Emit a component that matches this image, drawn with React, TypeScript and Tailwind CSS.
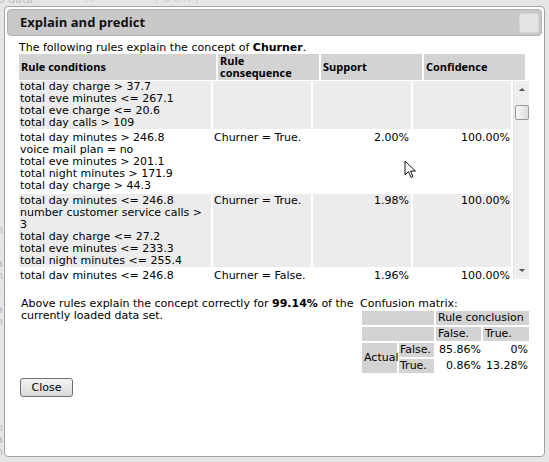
import React from 'react'

type Rule = {
  conditions: string[]
  consequence: string
  support: string
  confidence: string
}

const rules: Rule[] = [
  {
    conditions: [
      'total day charge > 37.7',
      'total eve minutes <= 267.1',
      'total eve charge <= 20.6',
      'total day calls > 109'
    ],
    consequence: '',
    support: '',
    confidence: ''
  },
  {
    conditions: [
      'total day minutes > 246.8',
      'voice mail plan = no',
      'total eve minutes > 201.1',
      'total night minutes > 171.9',
      'total day charge > 44.3'
    ],
    consequence: 'Churner = True.',
    support: '2.00%',
    confidence: '100.00%'
  },
  {
    conditions: [
      'total day minutes <= 246.8',
      'number customer service calls > 3',
      'total day charge <= 27.2',
      'total eve minutes <= 233.3',
      'total night minutes <= 255.4'
    ],
    consequence: 'Churner = True.',
    support: '1.98%',
    confidence: '100.00%'
  },
  {
    conditions: ['total day minutes <= 246.8', 'total eve minutes > 201.1'],
    consequence: 'Churner = False.',
    support: '1.96%',
    confidence: '100.00%'
  }
]

const head = "font-['Open_Sans',sans-serif] font-bold text-[11px] leading-[12px] text-black"

// faint bits of the page that peek out beside the modal
const sideBits = [
  { y: 222, t: 'n' },
  { y: 244, t: 'r' },
  { y: 256, t: 'a' },
  { y: 268, t: 'h' },
  { y: 290, t: 'r' },
  { y: 302, t: 'a' },
  { y: 314, t: 'h' },
  { y: 420, t: 'n' },
  { y: 432, t: 'a' },
  { y: 444, t: 'n' }
]

function Scrollbar() {
  return (
    <div className="w-[16px] h-full bg-[#eeeeee] border-l border-[#e4e4e4] flex flex-col items-center">
      <svg width="16" height="16" viewBox="0 0 16 16" className="shrink-0">
        <path d="M5 10 L8 7 L11 10 Z" fill="#555" />
      </svg>
      <div className="mt-[8px] w-[14px] h-[15px] rounded-[2px] border border-[#9a9a9a] bg-gradient-to-r from-[#f8f8f8] to-[#dcdcdc]" />
      <div className="flex-1" />
      <svg width="16" height="16" viewBox="0 0 16 16" className="shrink-0">
        <path d="M5 6 L8 9 L11 6 Z" fill="#555" />
      </svg>
    </div>
  )
}

export default function App() {
  return (
    <div className="relative w-[549px] h-[462px] overflow-hidden bg-[#e6e6e6] font-['DejaVu_Sans',sans-serif] text-[11px] text-black">
      {/* page behind the modal */}
      <div className="absolute left-[-2px] top-[-8px] text-[11px] text-[#bdbdbd]">o data</div>
      <div className="absolute left-[84px] top-[-9px] text-[11px] text-[#cfcfcf]">M</div>
      <div className="absolute left-[155px] top-[-9px] text-[11px] text-[#cfcfcf]">[ S  e    h ]</div>
      {sideBits.map((b) => (
        <div key={b.y} className="absolute left-[-4px] text-[11px] text-[#b5b5c5]" style={{ top: b.y }}>
          {b.t}
        </div>
      ))}

      <div className="absolute left-[4px] top-[6px] w-[541px] h-[451px] rounded-[4px] border border-[#a3a3a3] bg-white p-[2px]">
        <div className="h-[27px] rounded-[4px] border border-[#b2b2b2] bg-[#c9c9c9] flex items-center justify-between pl-[12px] pr-[2px]">
          <span className="font-['Open_Sans',sans-serif] font-bold text-[13px] text-[#111]">Explain and predict</span>
          <div className="w-[20px] h-[20px] rounded-[3px] bg-[#e4e4e4] border border-[#d6d6d6]" />
        </div>

        <div className="pl-[12px] w-[522px]">
          <p className="mt-[6px] leading-[12px]">
            The following rules explain the concept of <b>Churner</b>.
          </p>

          <div className="grid grid-cols-[197px_101px_101px_101px] gap-x-[2px] h-[26px]">
            <div className={`bg-[#d3d3d3] flex items-center pl-[2px] ${head}`}>Rule conditions</div>
            <div className={`bg-[#d3d3d3] flex items-center pl-[2px] ${head}`}>
              Rule
              <br />
              consequence
            </div>
            <div className={`bg-[#d3d3d3] flex items-center pl-[2px] ${head}`}>Support</div>
            <div className={`bg-[#d3d3d3] flex items-center pl-[2px] ${head}`}>Confidence</div>
          </div>

          <div className="mt-[1px] h-[198px] w-[510px] flex overflow-hidden">
            <div className="w-[494px] overflow-hidden">
              <div className="mt-[-1px]">
                {rules.map((r, i) => {
                  const bg = i % 2 === 0 ? 'bg-[#ececec]' : 'bg-white'
                  return (
                    <div
                      key={i}
                      className="grid grid-cols-[192px_98px_98px_98px] gap-x-[2px] mb-[2px] leading-[12px]"
                    >
                      <div className={`${bg} pt-[1px] pl-[1px]`}>
                        {r.conditions.map((c) => (
                          <div key={c}>{c}</div>
                        ))}
                      </div>
                      <div className={`${bg} pt-[1px] pl-[1px]`}>{r.consequence}</div>
                      <div className={`${bg} pt-[1px] pr-[2px] text-right`}>{r.support}</div>
                      <div className={`${bg} pt-[1px] pr-[1px] text-right`}>{r.confidence}</div>
                    </div>
                  )
                })}
              </div>
            </div>
            <Scrollbar />
          </div>

          <div className="mt-[19px] flex leading-[12px]">
            <p className="flex-1 pl-[2px] whitespace-nowrap">
              Above rules explain the concept correctly for <b>99.14%</b> of the
              <br />
              currently loaded data set.
            </p>
            <div className="w-[170px] mr-[-1px]">
              <div>Confusion matrix:</div>
              <div className="mt-[1px] ml-[2px] grid grid-cols-[35px_35px_45px_46px] grid-rows-[14px_14px_14px_14px] gap-[2px] leading-[14px]">
                <div className="col-span-2 bg-[#d3d3d3]" />
                <div className="col-span-2 bg-[#d3d3d3] pl-[2px]">Rule conclusion</div>
                <div className="col-span-2 bg-[#d3d3d3]" />
                <div className="bg-[#d3d3d3] pl-[2px]">False.</div>
                <div className="bg-[#d3d3d3] pl-[2px]">True.</div>
                <div className="row-span-2 bg-[#d3d3d3] pl-[2px] flex items-center">Actual</div>
                <div className="bg-[#d3d3d3] pl-[1px]">False.</div>
                <div className="text-right">85.86%</div>
                <div className="text-right pr-[1px]">0%</div>
                <div className="bg-[#d3d3d3] pl-[1px]">True.</div>
                <div className="text-right">0.86%</div>
                <div className="text-right pr-[1px]">13.28%</div>
              </div>
            </div>
          </div>

          <button className="mt-[5px] ml-[1px] w-[53px] h-[19px] rounded-[3px] border border-[#707070] bg-gradient-to-b from-[#f4f4f4] to-[#dadada] text-[11px] leading-[16px] text-black">
            Close
          </button>
        </div>
      </div>

      {/* mouse pointer */}
      <svg className="absolute left-[404px] top-[160px]" width="13" height="20" viewBox="0 0 13 20">
        <path d="M1 1 L1 15 L4.5 11.5 L7 17.5 L9 16.6 L6.6 11 L11.5 11 Z" fill="white" stroke="#111" strokeWidth="1" strokeLinejoin="round" />
      </svg>
    </div>
  )
}
